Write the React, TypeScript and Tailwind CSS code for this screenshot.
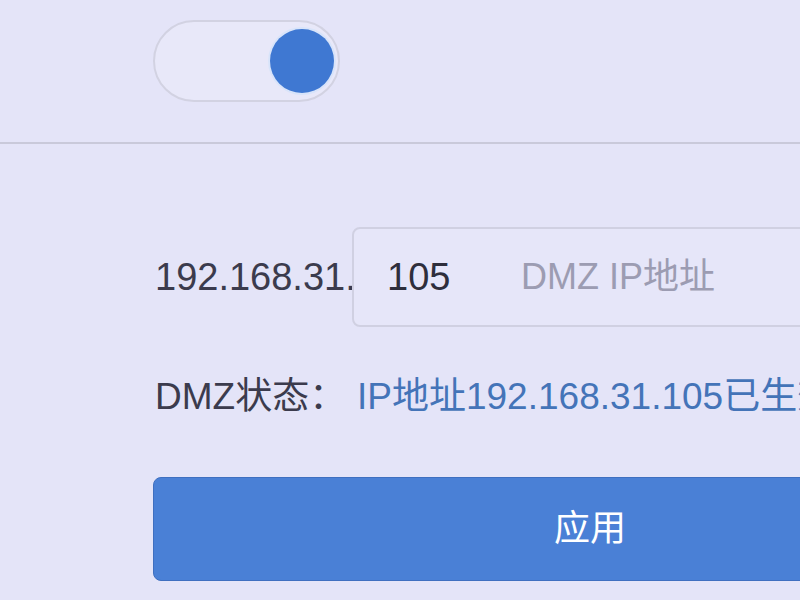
export default function App() {
  return (
    <div
      className="w-[800px] h-[600px] overflow-hidden bg-[#e4e4f8] text-[#3b3b4d]"
      style={{ fontFamily: '"Liberation Sans", "Noto Sans CJK SC", sans-serif' }}
    >
      {/* Toggle */}
      <div className="pl-[153px] pt-[20px]">
        <div className="w-[187px] h-[82px] rounded-full border-2 border-[#d2d2e2] bg-[#e8e8f9] flex items-center justify-end pr-[4px]">
          <span className="w-[64px] h-[64px] rounded-full bg-[#3f78d2] ring-2 ring-[#d8e4fa]" />
        </div>
      </div>

      <div className="mt-[40px] h-[2px] bg-[#c9c9da]" />

      {/* IP row */}
      <div className="mt-[83px] flex items-center">
        <span className="pl-[155px] w-[352px] shrink-0 text-[38px] leading-none">192.168.31.</span>
        <div className="shrink-0 w-[520px] h-[100px] rounded-[8px] border-2 border-[#d0d0e2] bg-[#e6e6f9] flex items-center pl-[33px]">
          <span className="text-[38px] leading-none text-[#2e2e3c] w-[134px]">105</span>
          <span className="text-[36px] leading-none text-[#9c9cb2]">DMZ IP地址</span>
        </div>
      </div>

      {/* Status */}
      <div className="mt-[47px] flex items-center h-[46px] text-[37px] whitespace-nowrap">
        <span className="pl-[155px] w-[357px] shrink-0">DMZ状态：</span>
        <span className="text-[#4474b8]">IP地址192.168.31.105已生效</span>
      </div>

      {/* Apply button */}
      <div className="mt-[57px] pl-[153px]">
        <button className="w-[874px] h-[104px] shrink-0 rounded-[8px] bg-[#4a80d6] border border-[#3f6fc0] text-white text-[36px] flex items-center justify-center">
          应用
        </button>
      </div>
    </div>
  );
}
